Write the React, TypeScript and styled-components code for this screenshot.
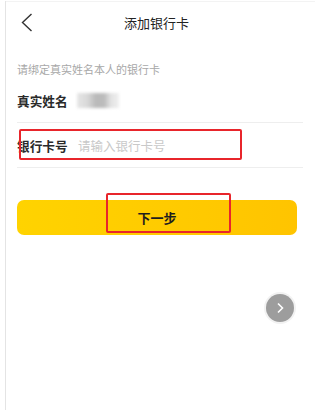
import React from "react";
import styled, { createGlobalStyle } from "styled-components";

const Global = createGlobalStyle`
  html, body { margin: 0; padding: 0; background: #fff; }
  body { font-family: "Noto Sans CJK SC", "Noto Sans", sans-serif; }
`;

const Frame = styled.div`
  position: relative;
  margin-left: 5px;
  border-left: 1px solid #e4e4e4;
  min-height: 410px;
  box-sizing: border-box;
`;

const Header = styled.div`
  height: 42px;
  display: grid;
  grid-template-columns: 1fr auto 1fr;
  align-items: center;
  padding: 0 23px 0 15px;
  border-top: 1px solid #f3f3f3;
  margin-top: 1px;
  box-sizing: border-box;
`;

const Back = styled.button`
  justify-self: start;
  border: 0;
  background: none;
  padding: 0;
  display: flex;
  cursor: pointer;
`;

const Title = styled.div`
  font-size: 13px;
  color: #222;
  line-height: 16px;
`;

const Hint = styled.div`
  margin: 18px 0 0 11px;
  font-size: 11px;
  line-height: 16px;
  color: #a8a8a8;
`;

const Form = styled.div`
  margin: 1px 12px 0 11px;
`;

const Row = styled.div`
  height: 44px;
  display: flex;
  align-items: center;
  gap: 9px;
  border-bottom: 1px solid #eeeeee;
`;

const Label = styled.span`
  font-size: 12.7px;
  font-weight: 700;
  color: #2a2a2a;
  width: 51px;
  white-space: nowrap;
`;

const Placeholder = styled.span`
  font-size: 12.5px;
  color: #c9c9c9;
  margin-left: 1px;
`;

const Blur = styled.div`
  width: 42px;
  height: 15px;
  filter: blur(1.5px);
  background: linear-gradient(
    to right,
    #e6e6e6 0%,
    #d8d8d8 25%,
    #b9b9b9 45%,
    #bcbcbc 65%,
    #e2e2e2 80%,
    #f0f0f0 100%
  );
`;

const Submit = styled.button`
  display: block;
  margin: 32px 18px 0 11px;
  width: 280px;
  height: 35px;
  border: 0;
  border-radius: 7px;
  background: linear-gradient(to right, #ffd300, #ffc400);
  font-family: "Noto Sans CJK SC", sans-serif;
  font-size: 13px;
  font-weight: 700;
  color: #1e1e1e;
  cursor: pointer;
`;

const Mark = styled.div<{ $l: number; $t: number; $w: number; $h: number }>`
  position: absolute;
  left: ${(p) => p.$l}px;
  top: ${(p) => p.$t}px;
  width: ${(p) => p.$w}px;
  height: ${(p) => p.$h}px;
  border: 2px solid #e8252b;
  border-radius: 2px;
  box-sizing: border-box;
  pointer-events: none;
`;

const Fab = styled.div`
  position: absolute;
  left: 260px;
  top: 293px;
  width: 28px;
  height: 28px;
  border-radius: 50%;
  background: #9d9d9d;
  box-shadow: 0 0 0 2px #f2f2f2;
  display: flex;
  align-items: center;
  justify-content: center;
`;

export default function App() {
  return (
    <>
      <Global />
      <Frame>
        <Header>
          <Back aria-label="返回">
            <svg width="12" height="19" viewBox="0 0 12 19">
              <polyline
                points="10.5,1 1.5,9.5 10.5,18"
                fill="none"
                stroke="#333"
                strokeWidth="1.4"
              />
            </svg>
          </Back>
          <Title>添加银行卡</Title>
          <span />
        </Header>
        <Hint>请绑定真实姓名本人的银行卡</Hint>
        <Form>
          <Row>
            <Label>真实姓名</Label>
            <Blur />
          </Row>
          <Row>
            <Label>银行卡号</Label>
            <Placeholder>请输入银行卡号</Placeholder>
          </Row>
        </Form>
        <Submit>下一步</Submit>
        <Mark $l={13} $t={128} $w={223} $h={31} />
        <Mark $l={100} $t={192} $w={125} $h={40} />
        <Fab>
          <svg width="10" height="12" viewBox="0 0 10 12">
            <polyline
              points="3,1.5 7.5,6 3,10.5"
              fill="none"
              stroke="#fff"
              strokeWidth="1.6"
            />
          </svg>
        </Fab>
      </Frame>
    </>
  );
}
